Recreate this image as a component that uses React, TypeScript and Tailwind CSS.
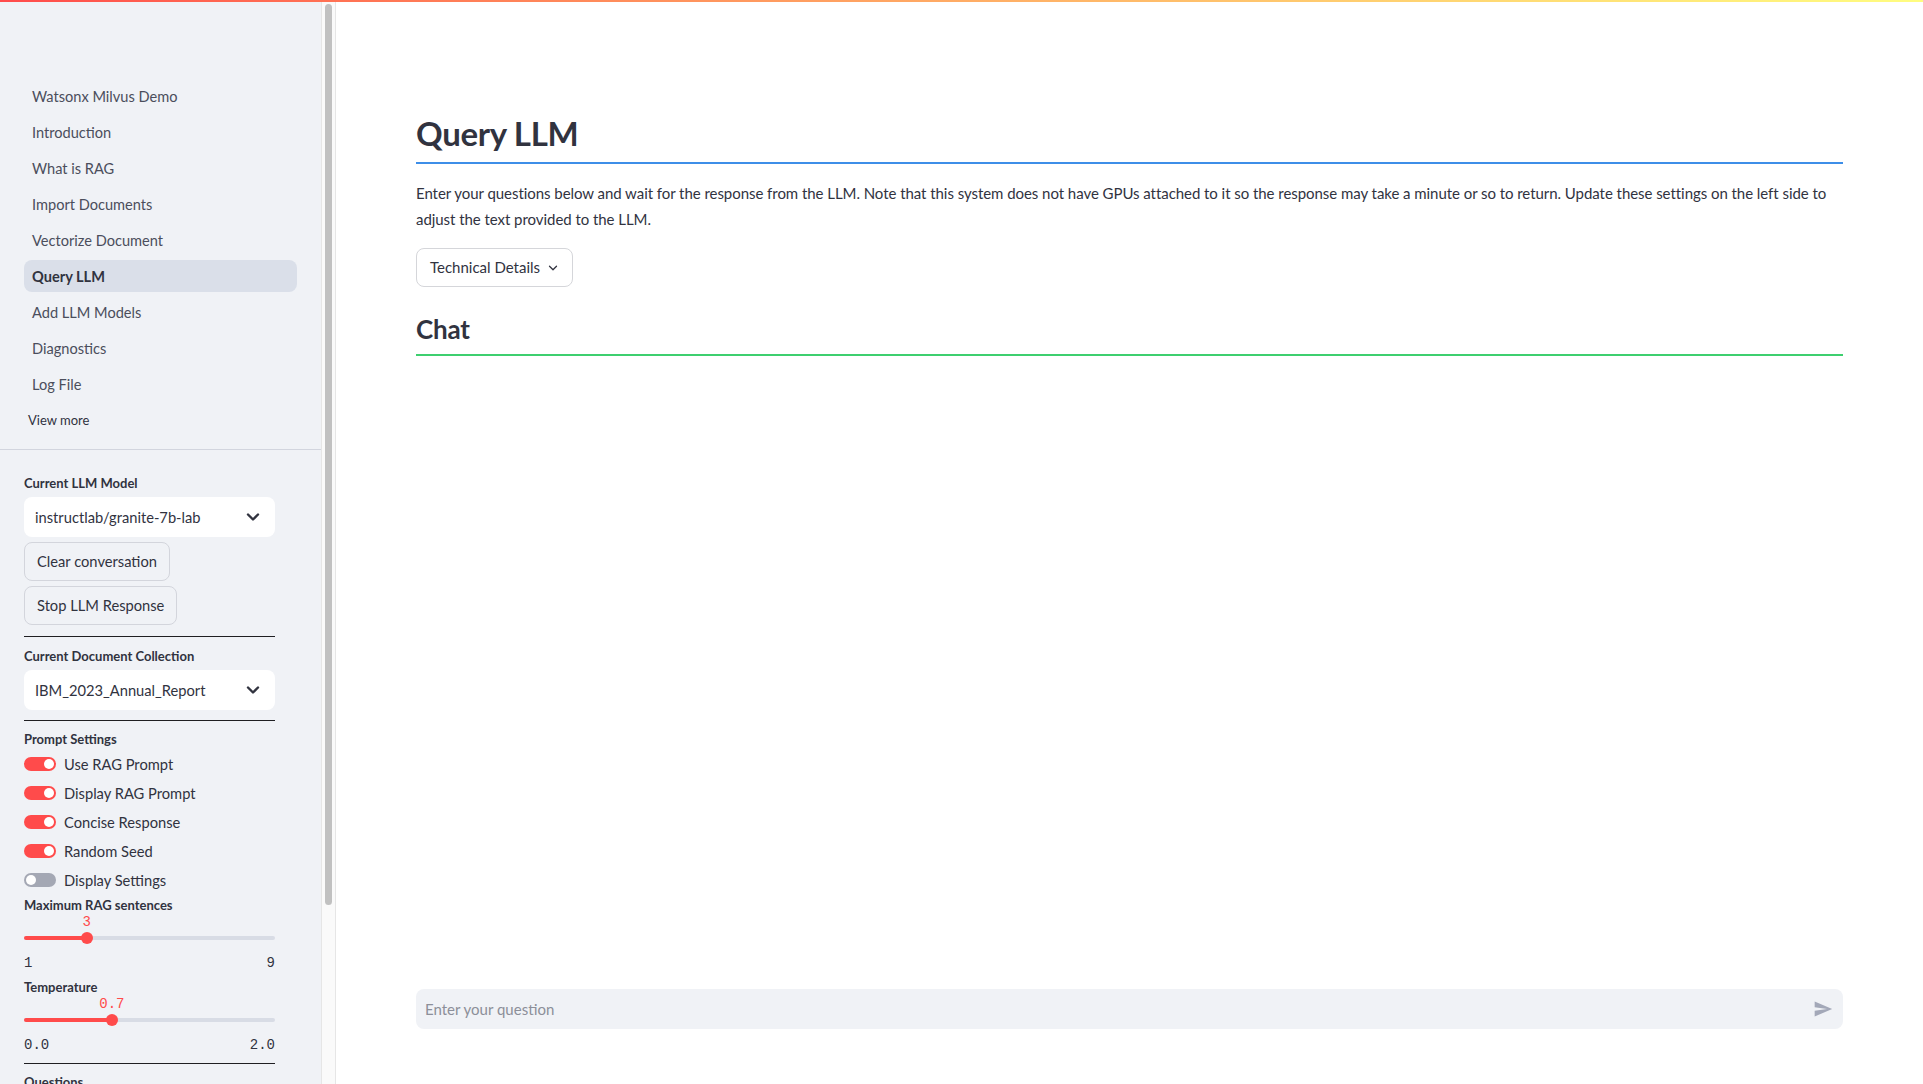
import { ReactNode } from "react";

const navItems = [
  "Watsonx Milvus Demo",
  "Introduction",
  "What is RAG",
  "Import Documents",
  "Vectorize Document",
  "Query LLM",
  "Add LLM Models",
  "Diagnostics",
  "Log File",
];

const toggles = [
  { label: "Use RAG Prompt", on: true },
  { label: "Display RAG Prompt", on: true },
  { label: "Concise Response", on: true },
  { label: "Random Seed", on: true },
  { label: "Display Settings", on: false },
];

function Chevron({ className }: { className?: string }) {
  return (
    <svg viewBox="0 0 20 20" className={className} fill="none" stroke="currentColor" strokeLinecap="round" strokeLinejoin="round">
      <path d="M5 7.5l5 5 5-5" />
    </svg>
  );
}

function Label({ children, className = "" }: { children: ReactNode; className?: string }) {
  return <div className={`h-5 text-[13px] font-bold leading-5 text-[#31333f] ${className}`}>{children}</div>;
}

function SelectBox({ value }: { value: string }) {
  return (
    <div className="mt-1 flex h-10 items-center justify-between rounded-lg bg-white pl-[11px] pr-[12px]">
      <span className="text-[14.7px]">{value}</span>
      <Chevron className="h-5 w-5 stroke-[2.4] text-[#31333f]" />
    </div>
  );
}

function SideButton({ children }: { children: ReactNode }) {
  return (
    <button className="mt-[5px] flex h-[39px] w-fit items-center rounded-lg border border-[#d3d5dc] bg-[#f0f2f6] px-3 text-[14.7px] text-[#31333f]">
      {children}
    </button>
  );
}

function Toggle({ label, on }: { label: string; on: boolean }) {
  return (
    <div className="flex h-6 items-center gap-2">
      <div
        className={`flex h-[14px] w-8 items-center rounded-full px-[2px] ${
          on ? "justify-end bg-[#ff4b4b]" : "justify-start bg-[#a4a8b4]"
        }`}
      >
        <div className="h-[10px] w-[10px] rounded-full bg-white" />
      </div>
      <span className="text-[14.7px]">{label}</span>
    </div>
  );
}

function Slider({ label, value, min, max, pct, gapAfter }: { label: string; value: string; min: string; max: string; pct: number; gapAfter?: string }) {
  return (
    <div className={gapAfter}>
      <Label>{label}</Label>
      <div className="relative -mt-px h-4">
        <span
          className="absolute top-0 -translate-x-1/2 font-['Liberation_Mono',monospace] text-[14px] leading-4 text-[#ff4b4b]"
          style={{ left: `${pct}%` }}
        >
          {value}
        </span>
      </div>
      <div className="relative flex h-4 items-center">
        <div className="h-1 w-full rounded-full bg-[#d8dce5]">
          <div className="h-1 rounded-full bg-[#ff4b4b]" style={{ width: `${pct}%` }} />
        </div>
        <div
          className="absolute top-1/2 h-3 w-3 -translate-x-1/2 -translate-y-1/2 rounded-full bg-[#ff4b4b]"
          style={{ left: `${pct}%` }}
        />
      </div>
      <div className="mt-[9px] flex h-4 justify-between font-['Liberation_Mono',monospace] text-[14px] leading-4 text-[#31333f]">
        <span>{min}</span>
        <span>{max}</span>
      </div>
    </div>
  );
}

function SendIcon() {
  return (
    <svg viewBox="0 0 24 24" className="h-5 w-5" fill="#a3a8b8">
      <path d="M2.01 21L23 12 2.01 3 2 10l15 2-15 2z" />
    </svg>
  );
}

export default function App() {
  return (
    <div className="relative flex h-screen w-full overflow-hidden bg-white font-['Lato','Noto_Sans',sans-serif] text-[#31333f]">
      <div className="absolute inset-x-0 top-0 z-10 h-[2px] bg-linear-to-r from-[#ff4b4b] to-[#fffd80]" />

      {/* Sidebar */}
      <aside className="flex h-full shrink-0 bg-[#f0f2f6]">
        <div className="w-[321px] overflow-hidden">
          <div className="px-6 pt-20">
            <nav className="flex flex-col gap-1">
              {navItems.map((item) => (
                <div
                  key={item}
                  className={`flex h-8 items-center rounded-lg px-2 pt-px text-[14.6px] ${
                    item === "Query LLM" ? "bg-[#dadfe9] font-bold text-[#31333f]" : "text-[#4b4e5c]"
                  }`}
                >
                  {item}
                </div>
              ))}
            </nav>
            <div className="mt-[10px] pl-1 text-[13px] leading-5 text-[#31333f]">View more</div>
          </div>
          <div className="mt-[19px] h-px bg-[#d2d5de]" />

          <div className="w-[275px] pl-6 pt-[23px]">
            <Label>Current LLM Model</Label>
            <SelectBox value="instructlab/granite-7b-lab" />
            <SideButton>Clear conversation</SideButton>
            <SideButton>Stop LLM Response</SideButton>
            <div className="mt-[11px] h-px bg-[#1f1f22]" />

            <Label className="mt-[9px]">Current Document Collection</Label>
            <SelectBox value="IBM_2023_Annual_Report" />
            <div className="mt-[10px] h-px bg-[#1f1f22]" />

            <Label className="mt-2">Prompt Settings</Label>
            <div className="mt-[3px] flex flex-col gap-[5px]">
              {toggles.map((t) => (
                <Toggle key={t.label} label={t.label} on={t.on} />
              ))}
            </div>

            <div className="mt-[3px]">
              <Slider label="Maximum RAG sentences" value="3" min="1" max="9" pct={25} gapAfter="mb-[6px]" />
              <Slider label="Temperature" value="0.7" min="0.0" max="2.0" pct={35} />
            </div>
            <div className="mt-[10px] h-px bg-[#1f1f22]" />
            <Label className="mt-2">Questions</Label>
          </div>
        </div>
        {/* scrollbar */}
        <div className="w-[15px] border-x border-[#e6e6e6] bg-[#fafafa] px-[3px] pt-[4px]">
          <div className="h-[901px] rounded-full bg-[#c1c1c1]" />
        </div>
      </aside>

      {/* Main */}
      <main className="flex h-full min-w-0 flex-1 flex-col px-20">
        <div className="pt-[112px]">
          <h2 className="text-[33px] font-bold leading-[43px] tracking-[-0.3px]">Query LLM</h2>
          <div className="mt-[7px] h-[2px] bg-[#3d8ee8]" />
          <p className="mt-[17px] text-[15px] leading-[25.6px] tracking-[-0.05px]">
            Enter your questions below and wait for the response from the LLM. Note that this system does not have GPUs attached to it so the
            response may take a minute or so to return. Update these settings on the left side to
            <br />
            adjust the text provided to the LLM.
          </p>
          <button className="mt-4 flex h-[39px] items-center gap-[6px] rounded-lg border border-[#d5d6da] bg-white pl-[13px] pr-3 text-[15px]">
            Technical Details
            <Chevron className="h-[14px] w-[14px] stroke-[1.8]" />
          </button>
          <h3 className="mt-[25px] text-[26px] font-bold leading-[34px] tracking-[-0.2px]">Chat</h3>
          <div className="mt-2 h-[2px] bg-[#3ecf6f]" />
        </div>

        <div className="mb-[55px] mt-auto flex h-10 items-center rounded-lg bg-[#f0f2f6] pl-[9px] pr-[10px]">
          <span className="flex-1 text-[15px] text-[#8c8f99]">Enter your question</span>
          <SendIcon />
        </div>
      </main>
    </div>
  );
}
